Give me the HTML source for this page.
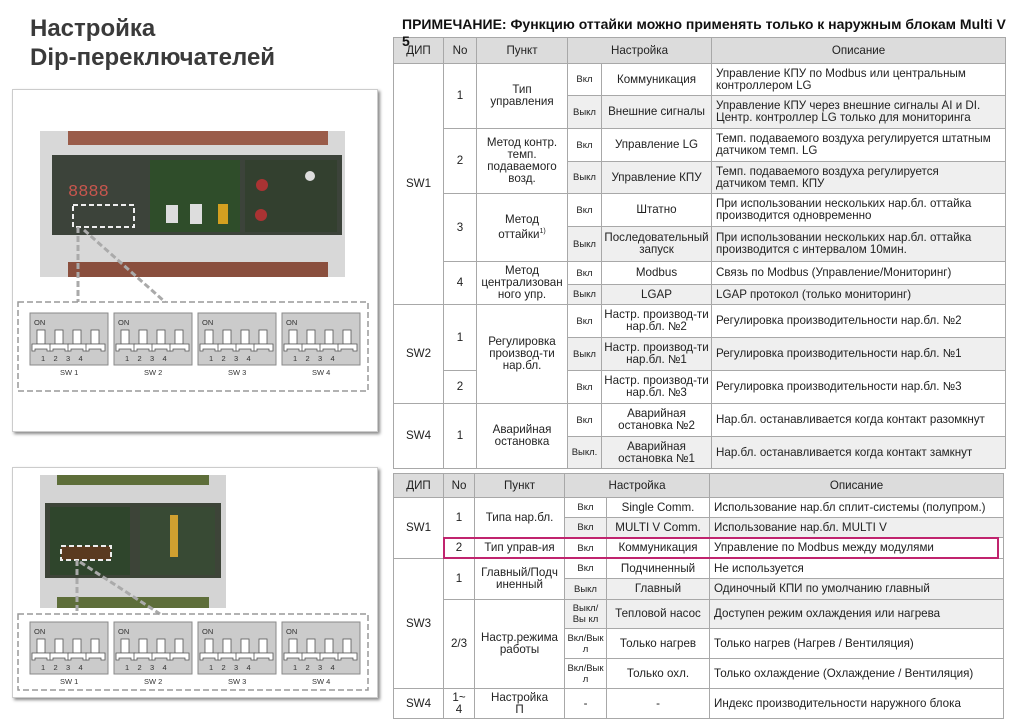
<!DOCTYPE html>
<html><head><meta charset="utf-8"><style>
*{margin:0;padding:0;box-sizing:border-box}
body{width:1024px;height:708px;background:#fff;position:relative;overflow:hidden;font-family:"Liberation Sans","DejaVu Sans",sans-serif;color:#222}
.title{position:absolute;left:30px;top:14px;font-size:24px;font-weight:bold;color:#3a3a3a;line-height:29px}
.note{position:absolute;left:402px;top:16px;font-size:14px;font-weight:bold;color:#111;line-height:17px;white-space:nowrap}
.frame{position:absolute;background:#fff;border:1px solid #ccc;box-shadow:2px 2px 3px #888}
table{position:absolute;border-collapse:collapse;table-layout:fixed;font-size:11.6px;line-height:12px}
td{border:1px solid #a8a8a8;text-align:center;vertical-align:middle;padding:0 2px;overflow:hidden}
td.d{text-align:left;padding-left:4px}
tr.h td{background:#dcdcdc}
.g{background:#efefef}
.s{font-size:9.5px;line-height:11px}
.hl{position:absolute;left:443px;top:537px;width:556px;height:22px;border:2px solid #c0246e}
svg text{white-space:pre}
</style></head><body>
<div class="title">Настройка<br>Dip-переключателей</div>

<div class="frame" style="left:12px;top:89px;width:366px;height:343px"></div>
<div class="frame" style="left:12px;top:467px;width:366px;height:231px"></div>

<svg style="position:absolute;left:0;top:0" width="390" height="708">
<defs>
<g id="blk">
<rect x="0" y="0" width="78" height="52" fill="#cbcbcb" stroke="#8a8a8a"/>
<g fill="#fff" stroke="#555" stroke-width="0.8">
<rect x="7" y="17" width="8" height="14"/><rect x="25" y="17" width="8" height="14"/><rect x="43" y="17" width="8" height="14"/><rect x="61" y="17" width="8" height="14"/>
<path d="M2 38V31H21V38H17V36H5V38Z"/><path d="M20 38V31H39V38H35V36H23V38Z"/><path d="M38 38V31H57V38H53V36H41V38Z"/><path d="M56 38V31H75V38H71V36H59V38Z"/>
</g>
</g>
</defs>
<rect x="40" y="131" width="305" height="146" fill="#d8d8d8"/>
<rect x="68" y="131" width="260" height="14" fill="#9a5c4a"/>
<rect x="68" y="262" width="260" height="15" fill="#8a4f3e"/>
<rect x="52" y="155" width="290" height="80" fill="#3c433a"/>
<rect x="150" y="160" width="90" height="72" fill="#2f4d2a"/>
<rect x="245" y="160" width="92" height="72" fill="#33402f"/>
<text x="68" y="196" font-size="17" fill="#c9564e" font-family="Liberation Mono">8888</text>
<rect x="73" y="205" width="61" height="22" fill="none" stroke="#eee" stroke-width="2" stroke-dasharray="5,3"/>
<rect x="166" y="205" width="12" height="18" fill="#ddd"/><rect x="190" y="204" width="12" height="20" fill="#ddd"/><rect x="218" y="204" width="10" height="20" fill="#d4a020"/>
<circle cx="262" cy="185" r="6" fill="#a33"/><circle cx="261" cy="215" r="6" fill="#a33"/><circle cx="310" cy="176" r="5" fill="#ddd"/>
<path d="M78 227V302" stroke="#aaa" stroke-width="3" stroke-dasharray="6,3" fill="none"/>
<path d="M84 230L165 302" stroke="#aaa" stroke-width="3" stroke-dasharray="6,3" fill="none"/>
<rect x="18" y="302" width="350" height="89" fill="none" stroke="#999" stroke-width="1.5" stroke-dasharray="6,3"/>
<use href="#blk" x="30" y="313"/><use href="#blk" x="114" y="313"/><use href="#blk" x="198" y="313"/><use href="#blk" x="282" y="313"/>
<g font-size="7.5" fill="#333">
<text x="34" y="325">ON</text><text x="118" y="325">ON</text><text x="202" y="325">ON</text><text x="286" y="325">ON</text>
<text x="41" y="361">1    2    3    4</text><text x="125" y="361">1    2    3    4</text><text x="209" y="361">1    2    3    4</text><text x="293" y="361">1    2    3    4</text>
<text x="60" y="375">SW 1</text><text x="144" y="375">SW 2</text><text x="228" y="375">SW 3</text><text x="312" y="375">SW 4</text>
</g>
<rect x="40" y="475" width="186" height="133" fill="#d4d4d4"/>
<rect x="57" y="475" width="152" height="10" fill="#5e6e3a"/>
<rect x="57" y="597" width="152" height="11" fill="#5e6e3a"/>
<rect x="45" y="503" width="176" height="75" fill="#3d4438"/>
<rect x="50" y="507" width="80" height="68" fill="#2f452c"/>
<rect x="140" y="507" width="75" height="68" fill="#384a34"/>
<rect x="170" y="515" width="8" height="42" fill="#d0a030"/>
<rect x="61" y="546" width="50" height="14" fill="#5a3a20" stroke="#eee" stroke-width="2" stroke-dasharray="5,3"/>
<path d="M77 560V614" stroke="#aaa" stroke-width="3" stroke-dasharray="6,3" fill="none"/>
<path d="M80 562L160 614" stroke="#aaa" stroke-width="3" stroke-dasharray="6,3" fill="none"/>
<rect x="18" y="614" width="350" height="76" fill="none" stroke="#999" stroke-width="1.5" stroke-dasharray="6,3"/>
<use href="#blk" x="30" y="622"/><use href="#blk" x="114" y="622"/><use href="#blk" x="198" y="622"/><use href="#blk" x="282" y="622"/>
<g font-size="7.5" fill="#333">
<text x="34" y="634">ON</text><text x="118" y="634">ON</text><text x="202" y="634">ON</text><text x="286" y="634">ON</text>
<text x="41" y="670">1    2    3    4</text><text x="125" y="670">1    2    3    4</text><text x="209" y="670">1    2    3    4</text><text x="293" y="670">1    2    3    4</text>
<text x="60" y="684">SW 1</text><text x="144" y="684">SW 2</text><text x="228" y="684">SW 3</text><text x="312" y="684">SW 4</text>
</g>
</svg>

<table style="left:393px;top:37px;width:613px">
<colgroup><col style="width:50px"><col style="width:33px"><col style="width:91px"><col style="width:34px"><col style="width:110px"><col></colgroup>
<tr class="h" style="height:26px"><td>ДИП</td><td>No</td><td>Пункт</td><td colspan="2">Настройка</td><td>Описание</td></tr>
<tr style="height:32px"><td rowspan="8">SW1</td><td rowspan="2">1</td><td rowspan="2">Тип<br>управления</td><td class="s">Вкл</td><td>Коммуникация</td><td class="d">Управление КПУ по Modbus или центральным контроллером LG</td></tr>
<tr style="height:33px"><td class="s g">Выкл</td><td class="g">Внешние сигналы</td><td class="d g">Управление КПУ через внешние сигналы AI и DI. Центр. контроллер LG только для мониторинга</td></tr>
<tr style="height:33px"><td rowspan="2">2</td><td rowspan="2">Метод контр. темп. подаваемого возд.</td><td class="s">Вкл</td><td>Управление LG</td><td class="d">Темп. подаваемого воздуха регулируется штатным датчиком темп. LG</td></tr>
<tr style="height:32px"><td class="s g">Выкл</td><td class="g">Управление КПУ</td><td class="d g">Темп. подаваемого воздуха регулируется<br>датчиком темп. КПУ</td></tr>
<tr style="height:33px"><td rowspan="2">3</td><td rowspan="2">Метод<br>оттайки<sup style="font-size:7px">1)</sup></td><td class="s">Вкл</td><td>Штатно</td><td class="d">При использовании нескольких нар.бл. оттайка производится одновременно</td></tr>
<tr style="height:35px"><td class="s g">Выкл</td><td class="g">Последовательный запуск</td><td class="d g">При использовании нескольких нар.бл. оттайка производится с интервалом 10мин.</td></tr>
<tr style="height:23px"><td rowspan="2">4</td><td rowspan="2">Метод централизован ного упр.</td><td class="s">Вкл</td><td>Modbus</td><td class="d">Связь по Modbus (Управление/Мониторинг)</td></tr>
<tr style="height:20px"><td class="s g">Выкл</td><td class="g">LGAP</td><td class="d g">LGAP протокол (только мониторинг)</td></tr>
<tr style="height:33px"><td rowspan="3">SW2</td><td rowspan="2">1</td><td rowspan="3">Регулировка производ-ти нар.бл.</td><td class="s">Вкл</td><td>Настр. производ-ти нар.бл. №2</td><td class="d">Регулировка производительности нар.бл. №2</td></tr>
<tr style="height:33px"><td class="s g">Выкл</td><td class="g">Настр. производ-ти нар.бл. №1</td><td class="d g">Регулировка производительности нар.бл. №1</td></tr>
<tr style="height:33px"><td>2</td><td class="s">Вкл</td><td>Настр. производ-ти нар.бл. №3</td><td class="d">Регулировка производительности нар.бл. №3</td></tr>
<tr style="height:33px"><td rowspan="2">SW4</td><td rowspan="2">1</td><td rowspan="2">Аварийная остановка</td><td class="s">Вкл</td><td>Аварийная остановка №2</td><td class="d">Нар.бл. останавливается когда контакт разомкнут</td></tr>
<tr style="height:32px"><td class="s g">Выкл.</td><td class="g">Аварийная остановка №1</td><td class="d g">Нар.бл. останавливается когда контакт замкнут</td></tr>
</table>

<table style="left:393px;top:473px;width:611px">
<colgroup><col style="width:50px"><col style="width:31px"><col style="width:90px"><col style="width:42px"><col style="width:103px"><col></colgroup>
<tr class="h" style="height:24px"><td>ДИП</td><td>No</td><td>Пункт</td><td colspan="2">Настройка</td><td>Описание</td></tr>
<tr style="height:20px"><td rowspan="3">SW1</td><td rowspan="2">1</td><td rowspan="2">Типа нар.бл.</td><td class="s">Вкл</td><td>Single Comm.</td><td class="d">Использование нар.бл сплит-системы (полупром.)</td></tr>
<tr style="height:20px"><td class="s g">Вкл</td><td class="g">MULTI V Comm.</td><td class="d g">Использование нар.бл.  MULTI V</td></tr>
<tr style="height:21px"><td>2</td><td>Тип управ-ия</td><td class="s">Вкл</td><td>Коммуникация</td><td class="d">Управление по Modbus между модулями</td></tr>
<tr style="height:20px"><td rowspan="5">SW3</td><td rowspan="2">1</td><td rowspan="2">Главный/Подч иненный</td><td class="s">Вкл</td><td>Подчиненный</td><td class="d">Не используется</td></tr>
<tr style="height:21px"><td class="s g">Выкл</td><td class="g">Главный</td><td class="d g">Одиночный КПИ по умолчанию главный</td></tr>
<tr style="height:29px"><td rowspan="3">2/3</td><td rowspan="3">Настр.режима работы</td><td class="s g">Выкл/Вы кл</td><td class="g">Тепловой насос</td><td class="d g">Доступен режим охлаждения или нагрева</td></tr>
<tr style="height:30px"><td class="s">Вкл/Вык л</td><td>Только нагрев</td><td class="d">Только нагрев (Нагрев / Вентиляция)</td></tr>
<tr style="height:30px"><td class="s">Вкл/Вык л</td><td>Только охл.</td><td class="d">Только охлаждение (Охлаждение / Вентиляция)</td></tr>
<tr style="height:30px"><td>SW4</td><td>1~<br>4</td><td>Настройка<br>П</td><td>-</td><td>-</td><td class="d">Индекс производительности наружного блока</td></tr>
</table>
<div class="hl"></div>
<div class="note">ПРИМЕЧАНИЕ: Функцию оттайки можно применять только к наружным блокам Multi V<br>5</div>
</body></html>
